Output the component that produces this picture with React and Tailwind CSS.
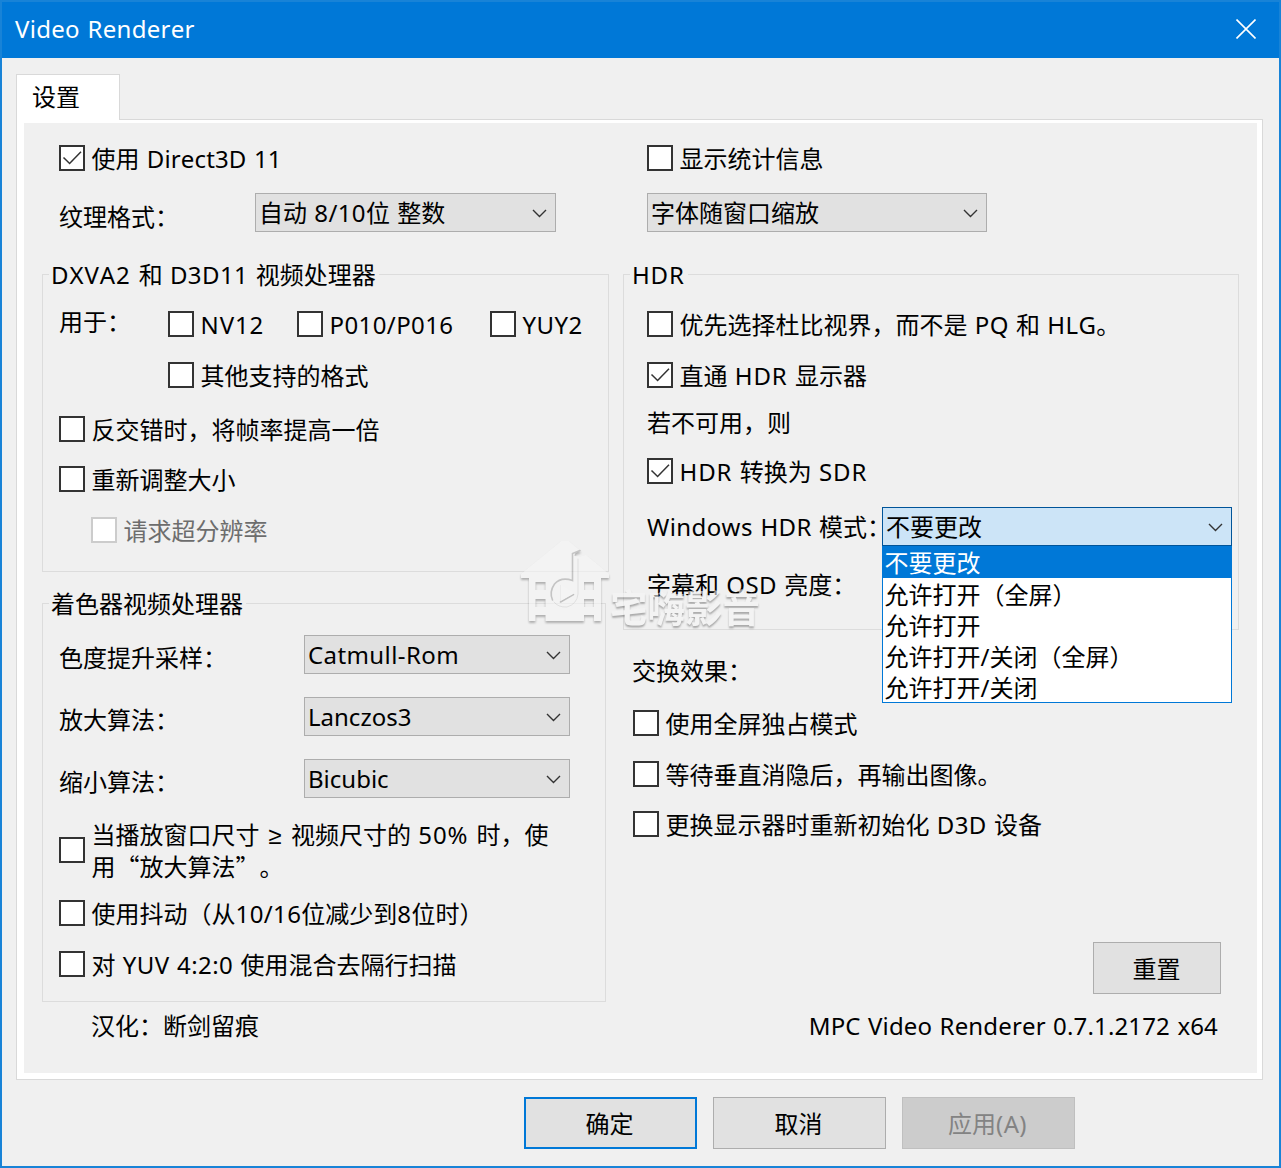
import React from "react";

function En({ wide, children }) {
  return <span className={wide ? "tracking-[0.9px]" : "tracking-[0.4px]"}>{children}</span>;
}

function Check({ checked, disabled, className = "", boxClass = "", children }) {
  return (
    <label className={"flex items-start whitespace-nowrap " + (disabled ? "text-[#6d6d6d] " : "") + className}>
      <span
        className={
          "flex size-[26px] shrink-0 items-center justify-center border-2 bg-white " +
          (disabled ? "border-[#cccccc] " : "border-[#333333] ") +
          boxClass
        }
      >
        {checked && (
          <svg width="22" height="22" viewBox="0 0 22 22" fill="none" stroke="#333" strokeWidth="1.5">
            <path d="M2.5 10.5 L8.6 16.5 L20 4.7" />
          </svg>
        )}
      </span>
      <span className="-mt-0.5 ml-[6.5px] leading-[31px]">{children}</span>
    </label>
  );
}

function Select({ className = "", tone = "border-[#adadad] bg-[#e1e1e1]", children }) {
  return (
    <div className={"flex h-[39px] items-center justify-between whitespace-nowrap border pl-[3px] pr-2 " + tone + " " + className}>
      <span className="leading-[31px]">{children}</span>
      <svg width="15" height="9" viewBox="0 0 15 9" fill="none" stroke="#333" strokeWidth="1.4" className="mt-px">
        <path d="M1 1 L7.5 7.5 L14 1" />
      </svg>
    </div>
  );
}

function Group({ title, className = "", children }) {
  return (
    <section className={"border border-[#dcdcdc] " + className}>
      <div className="-mt-4 ml-[6px] flex h-[31px]">
        <span className="whitespace-nowrap bg-[#f0f0f0] pl-[2px] pr-[3px] leading-[31px]">{title}</span>
      </div>
      {children}
    </section>
  );
}

function Watermark() {
  return (
    <div className="pointer-events-none absolute left-[518px] top-[536px] z-10 flex opacity-60">
      <svg width="90" height="90" viewBox="0 0 90 90" className="drop-shadow-[0_2px_1px_rgba(0,0,0,0.45)]">
        <path
          fill="#f6f6f6"
          fillRule="evenodd"
          d="M1 36 L42 2.5 H48 L60 12.5 L56 14.5 Q54.5 15.5 54.5 18 L60 18.5 L66 17 L89 36 V40 H81 V83 H74 V77 H64 V83 H25.5 V77 H15.5 V83 H9 V40 H1Z M15.5 44 V52 H25.5 V44Z M64 44 V52 H74 V44Z M15.5 61 V69 H25.5 V61Z M64 61 V69 H74 V61Z"
        />
        <g fill="none" strokeLinecap="round">
          <path d="M60 12.5 L52.5 15.5 V42.5 Q41 38.5 34.5 46 Q29 54 32.5 62" stroke="#a8a8a8" strokeWidth="1.6" />
          <path d="M58 21 V56 Q57 66 47 69 Q38 69.5 34 64" stroke="#d6d6d6" strokeWidth="1" />
          <path d="M40.5 47.5 V63" stroke="#d9d9d9" strokeWidth="1" />
          <path d="M40.5 64 L53.5 56.5" stroke="#a0a0a0" strokeWidth="1.6" />
        </g>
        <path d="M40.5 47 L54 55.5 L40.5 63Z" fill="#f8f8f8" />
      </svg>
      <span className="mt-[50px] text-[37.5px] font-bold leading-[40px] text-[#f6f6f6] [text-shadow:0_2px_2px_rgba(0,0,0,0.5)]">宅嗨影音</span>
    </div>
  );
}

const modes = ["不要更改", "允许打开（全屏）", "允许打开", "允许打开/关闭（全屏）", "允许打开/关闭"];

export default function App() {
  return (
    <main
      lang="zh-CN"
      className="relative flex h-[1168px] w-[1281px] flex-col overflow-hidden border-2 border-[#1883d7] bg-[#f0f0f0] font-['Noto_Sans','Noto_Sans_CJK_SC',sans-serif] text-[24px] text-black [font-kerning:none] [word-spacing:1px]"
    >
      <header className="flex h-14 shrink-0 items-center justify-between bg-[#0078d7] pl-[13px] pr-[23px] text-white">
        <h1 className="-mt-1 leading-[31px] tracking-[0.3px]">Video Renderer</h1>
        <svg width="20" height="20" viewBox="0 0 20 20" stroke="white" strokeWidth="1.6" className="-mt-0.5">
          <path d="M0.5 0.5 L19.5 19.5 M19.5 0.5 L0.5 19.5" />
        </svg>
      </header>

      <div className="ml-[14px] mt-4 w-[1247px]">
        <div className="relative flex h-[46px] w-[104px] border border-b-0 border-[#d9d9d9] bg-white pl-[15px] pt-[6px] leading-[31px]">
          设置
        </div>
        <div className="-mt-px h-[961px] border border-[#d9d9d9] bg-white pb-[6px] pl-[7px] pr-[5px] pt-[3px]">
          <div className="flex h-[950px] bg-[#f0f0f0]">
            <div className="w-[585px] pl-[18px]">
              <Check checked className="ml-[17px] mt-[22px] h-[31px]">使用 <span className="tracking-[0.15px]">Direct3D 11</span></Check>
              <div className="ml-[17px] mt-[17px] flex h-[39px]">
                <span className="mt-2 w-[196px] leading-[31px]">纹理格式：</span>
                <Select className="w-[301px]">自动 <En>8/10</En>位 整数</Select>
              </div>

              <Group
                title={<><En wide>DXVA2 </En>和 <En>D3D11 </En>视频处理器</>}
                className="mt-[42px] h-[298px] w-[567px]"
              >
                <div className="ml-4 mt-[21px] flex h-[51px]">
                  <span className="-mt-[5px] w-[109px] leading-[31px]">用于：</span>
                  <Check className="w-[129px]"><En wide>NV12</En></Check>
                  <Check className="w-[193px]"><En>P010/P016</En></Check>
                  <Check><En>YUY2</En></Check>
                </div>
                <Check className="ml-[125px] h-[54px]">其他支持的格式</Check>
                <Check className="ml-4 h-[50px]">反交错时，将帧率提高一倍</Check>
                <Check className="ml-4 h-[51px]">重新调整大小</Check>
                <Check disabled className="ml-12">请求超分辨率</Check>
              </Group>

              <Group title="着色器视频处理器" className="mt-[31px] h-[399px] w-[564px]">
                <div className="ml-4 mt-4 flex h-[62px]">
                  <span className="mt-[7px] w-[245px] leading-[31px]">色度提升采样：</span>
                  <Select className="w-[266px]"><En>Catmull-Rom</En></Select>
                </div>
                <div className="ml-4 flex h-[62px]">
                  <span className="mt-[7px] w-[245px] leading-[31px]">放大算法：</span>
                  <Select className="w-[266px]">Lanczos3</Select>
                </div>
                <div className="ml-4 flex h-[62px]">
                  <span className="mt-[7px] w-[245px] leading-[31px]">缩小算法：</span>
                  <Select className="w-[266px]">Bicubic</Select>
                </div>
                <Check className="ml-4 h-[79px]" boxClass="mt-4">
                  当播放窗口尺寸 <span className="inline-block w-4 text-center font-['Liberation_Sans']">≥</span>{" "}
                  <span className="ml-px">视频尺寸的</span> <span className="tracking-[0.9px]">50% </span>时，使
                  <span className="-mt-px block font-['Noto_Sans_CJK_SC'] [text-spacing-trim:space-all]">用“放大算法”。</span>
                </Check>
                <Check className="ml-4 h-[51px]">使用抖动（从<En>10/16</En>位减少到<En>8</En>位时）</Check>
                <Check className="ml-4">对 <En>YUV 4:2:0</En> 使用混合去隔行扫描</Check>
              </Group>
              <p className="ml-[49px] mt-2 leading-[31px]">汉化：断剑留痕</p>
            </div>

            <div className="w-[648px] pl-[14px]">
              <Check className="ml-6 mt-[22px] h-[31px]">显示统计信息</Check>
              <Select className="ml-6 mt-[17px] w-[340px]">字体随窗口缩放</Select>

              <Group title={<span className="tracking-[0.8px]">HDR</span>} className="mt-[42px] h-[356px] w-[616px]">
                <Check className="ml-[23px] mt-[21px] h-[51px]">优先选择杜比视界，而不是 <En>PQ</En> 和 <En>HLG</En>。</Check>
                <Check checked className="ml-[23px] h-[46px]">直通 <En wide>HDR</En> 显示器</Check>
                <p className="-mt-px ml-[23px] h-[51px] leading-[31px]">若不可用，则</p>
                <Check checked className="ml-[23px] h-[49px]"><En wide>HDR</En> 转换为 <En wide>SDR</En></Check>
                <div className="relative ml-[23px] flex h-[58px]">
                  <span className="mt-1 w-[235px] shrink-0 whitespace-nowrap leading-[31px]"><En>Windows HDR</En> 模式：</span>
                  <Select className="w-[350px]" tone="border-[#005499] bg-[#cce4f7]">不要更改</Select>
                  <ul className="absolute left-[235px] top-[39px] z-20 w-[350px] border border-t-0 border-[#0078d7] bg-white leading-[31px]">
                    {modes.map((mode, i) => (
                      <li key={mode} className={i === 0 ? "h-8 bg-[#0078d7] pl-[1.5px] pt-px text-white" : "h-[31px] pl-[1.5px] pt-px"}>
                        {mode}
                      </li>
                    ))}
                  </ul>
                </div>
                <p className="ml-[23px] mt-1 leading-[31px]">字幕和 <En>OSD</En> 亮度：</p>
              </Group>

              <p className="ml-[9px] mt-[25px] h-[55px] leading-[31px]">交换效果：</p>
              <Check className="ml-[10px] h-[51px]">使用全屏独占模式</Check>
              <Check className="ml-[10px] h-[50px]">等待垂直消隐后，再输出图像。</Check>
              <Check className="ml-[10px] h-[31px]">更换显示器时重新初始化 <En>D3D</En> 设备</Check>
              <button className="ml-[470px] mt-[100px] block h-[52px] w-[128px] border border-[#adadad] bg-[#e1e1e1] pr-px pt-px">重置</button>
              <p className="mt-4 w-[595px] text-right leading-[31px] tracking-[0.15px]">MPC Video Renderer 0.7.1.2172 x64</p>
            </div>
          </div>
        </div>
      </div>

      <footer className="ml-[522px] mt-[17px] flex gap-4">
        <button className="h-[52px] w-[173px] border-2 border-[#0078d7] bg-[#e1e1e1] pr-[2px] pt-px">确定</button>
        <button className="h-[52px] w-[173px] border border-[#adadad] bg-[#e1e1e1] pr-[2px] pt-px">取消</button>
        <button disabled className="h-[52px] w-[173px] border border-[#bfbfbf] bg-[#cccccc] pr-[2px] pt-px text-[#838383]">应用<En>(A)</En></button>
      </footer>
      <Watermark />
    </main>
  );
}
